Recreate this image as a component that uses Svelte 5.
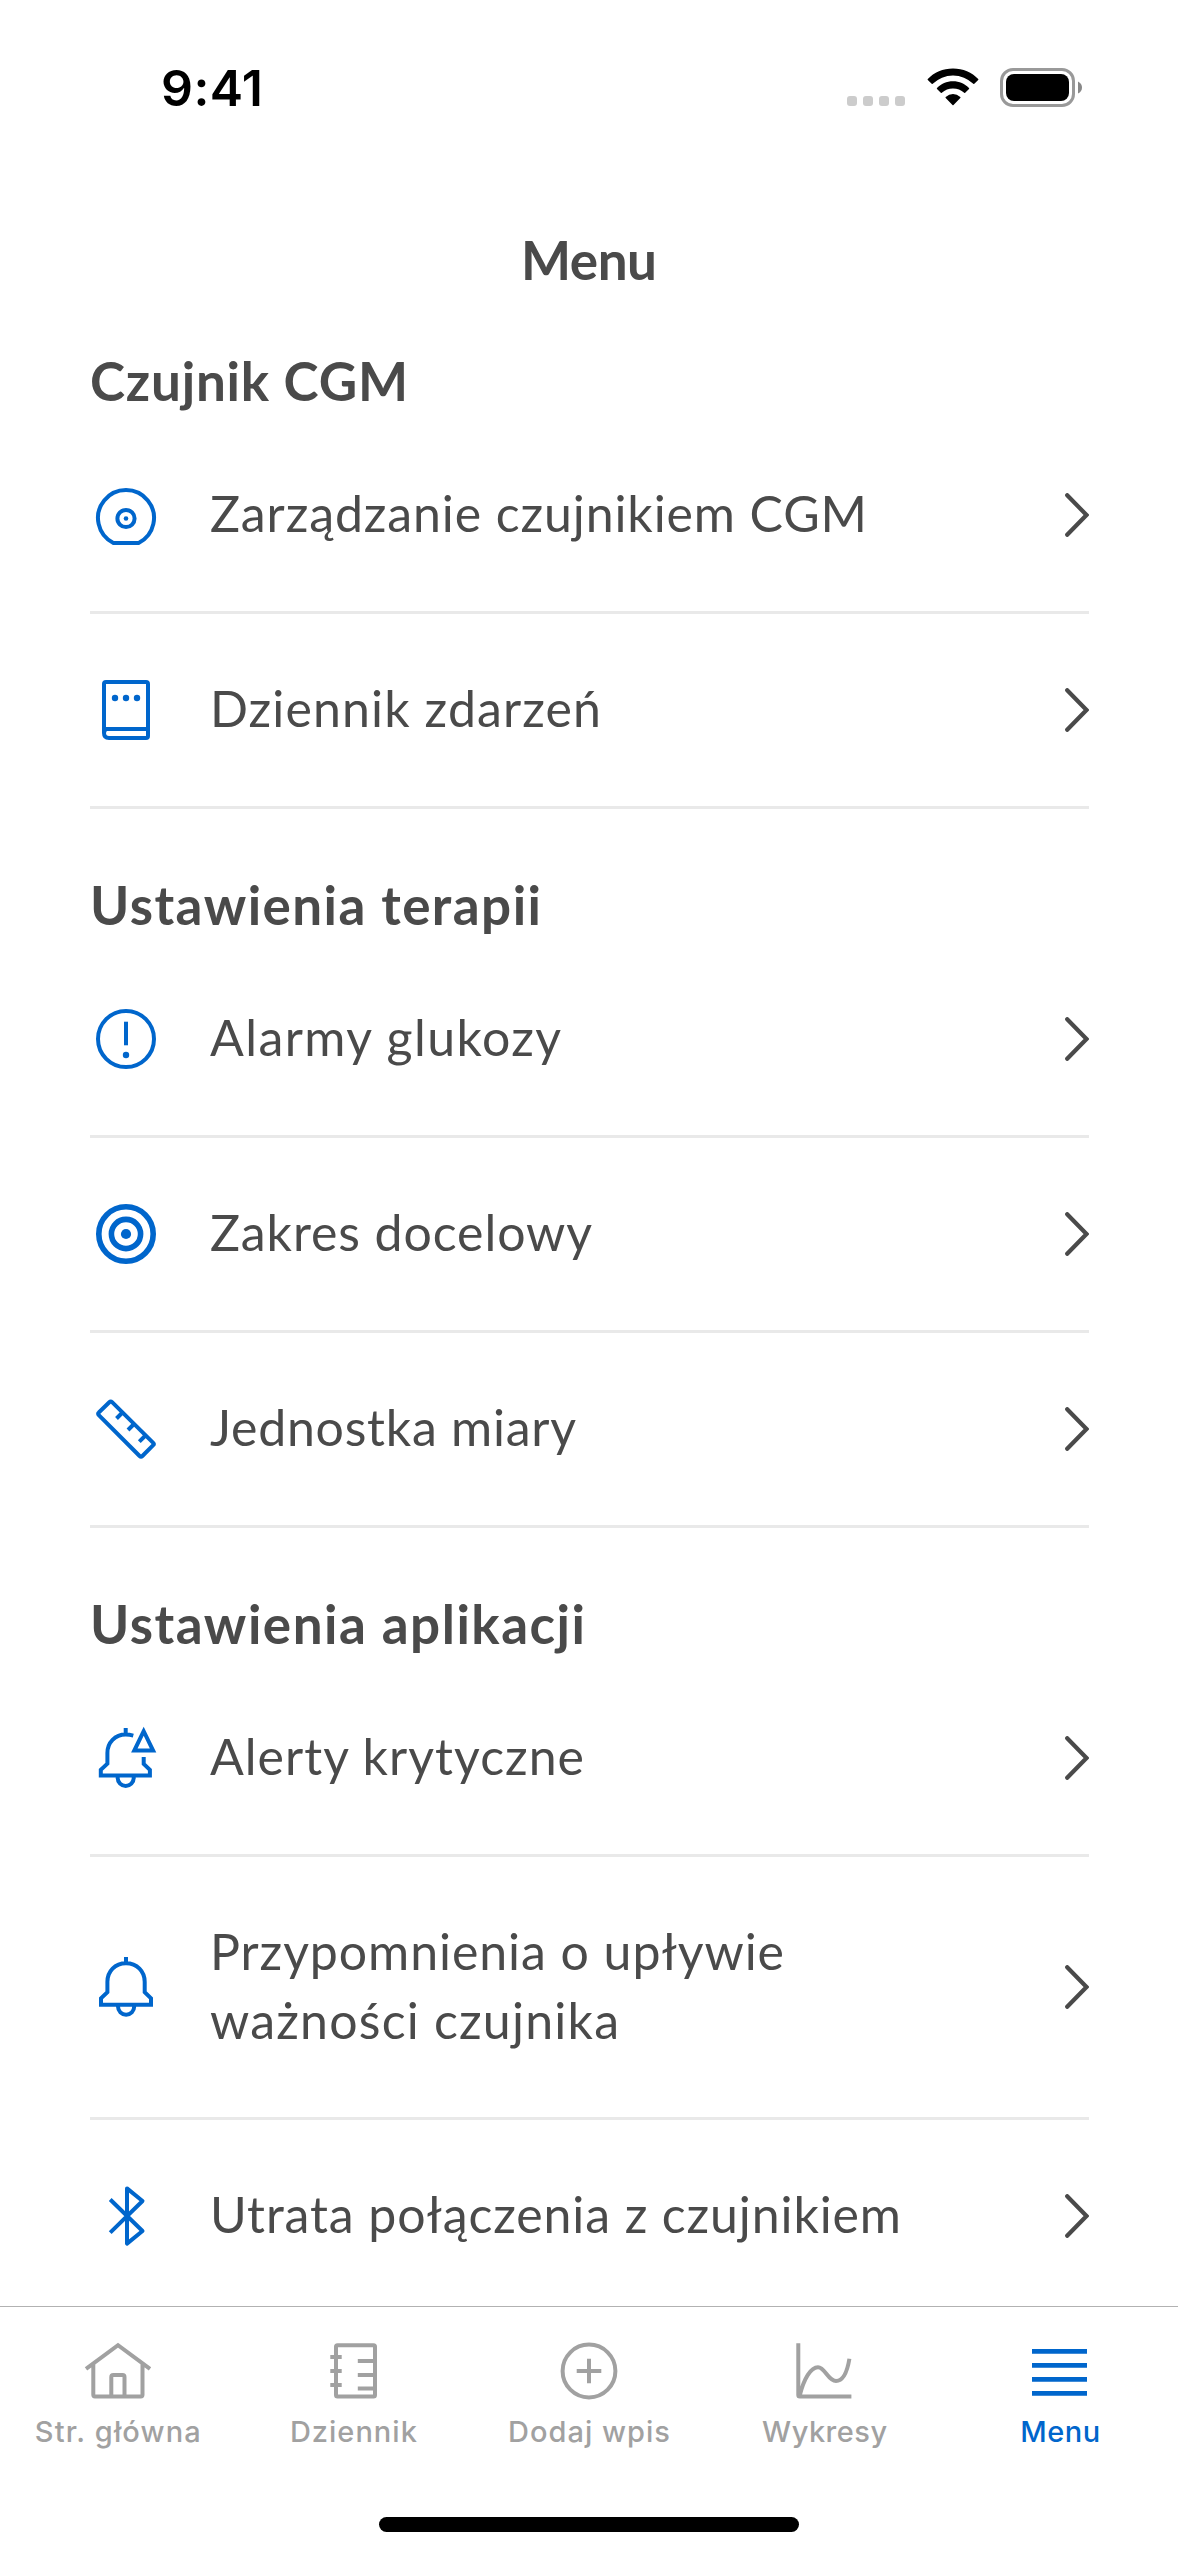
<script>
  const sections = [
    {
      title: 'Czujnik CGM', width: 318,
      items: [
        { icon: 'sensor', lines: [['Zarządzanie czujnikiem CGM', 657]] },
        { icon: 'book', lines: [['Dziennik zdarzeń', 391]] }
      ]
    },
    {
      title: 'Ustawienia terapii', width: 451,
      items: [
        { icon: 'alarm', lines: [['Alarmy glukozy', 351]] },
        { icon: 'target', lines: [['Zakres docelowy', 382]] },
        { icon: 'ruler', lines: [['Jednostka miary', 366]] }
      ]
    },
    {
      title: 'Ustawienia aplikacji', width: 495,
      items: [
        { icon: 'bellAlert', lines: [['Alerty krytyczne', 374]] },
        { icon: 'bell', lines: [['Przypomnienia o upływie', 574], ['ważności czujnika', 409]] },
        { icon: 'bluetooth', lines: [['Utrata połączenia z czujnikiem', 691]] }
      ]
    }
  ];

  const tabs = [
    { icon: 'home', label: 'Str. główna', width: 166 },
    { icon: 'journal', label: 'Dziennik', width: 127 },
    { icon: 'plus', label: 'Dodaj wpis', width: 162 },
    { icon: 'chart', label: 'Wykresy', width: 125 },
    { icon: 'menu', label: 'Menu', width: 80, active: true }
  ];

  // Tracks a label's letters so that it takes the given width.
  function track(node, width) {
    const natural = node.getBoundingClientRect().width;
    const gaps = node.textContent.length - 1;
    const spacing = (width - natural) / gaps;
    node.style.letterSpacing = `${spacing}px`;
    node.style.marginRight = `${-spacing}px`;
  }
</script>

{#snippet glyph(name)}
  <svg class="glyph" viewBox="0 0 72 72" width="72" height="72" aria-hidden="true">
    {#if name === 'sensor'}
      <path d="M23.4 64A28 28 0 1 1 48.6 64Z" stroke-linejoin="round" />
      <circle cx="36" cy="39.5" r="8.6" />
      <circle class="solid" cx="36" cy="39.5" r="2.3" />
    {:else if name === 'book'}
      <path d="M16 8H56Q58 8 58 10V62Q58 64 56 64H19Q14 64 14 59V10Q14 8 16 8ZM14 55H58M14 55Q14 57 15 59" />
      <circle class="solid" cx="25" cy="24" r="3.2" />
      <circle class="solid" cx="36" cy="24" r="3.2" />
      <circle class="solid" cx="47" cy="24" r="3.2" />
    {:else if name === 'alarm'}
      <circle cx="36" cy="36" r="28" />
      <path d="M36 18.7V42.3" />
      <circle class="solid" cx="36" cy="52" r="3.2" />
    {:else if name === 'target'}
      <circle class="heavy" cx="36" cy="36" r="27.2" />
      <circle class="heavy" cx="36" cy="36" r="14.6" />
      <circle class="solid" cx="36" cy="36" r="5.1" />
    {:else if name === 'ruler'}
      <path d="M19.3 9.2Q20.7 7.8 22.1 9.2L63.2 49.8Q64.4 51 63.2 52.2L52.4 63Q51 64.4 49.6 63L8.8 22.1Q7.4 20.7 8.8 19.5Z" />
      <path d="M33 19L26.5 25.5M44.5 30.5L38 37M56 42L49.3 48.7" />
    {:else if name === 'bellAlert'}
      <path d="M35.7 5.9V12.6M43.3 13.6Q39.5 12.6 35.7 12.6C25 12.6 17.4 20.5 17.4 31V41.6L10.8 47.8V53.4H59.9V47.8L53.7 42V35M27.7 54V56A8 8 0 0 0 43.7 56V54M53.7 9.2L44.3 28.5H63.1Z" />
    {:else if name === 'bell'}
      <path d="M36 6V12M36 12.3C25 12.3 17.4 20.3 17.4 30.8V41.2L11 47.3V53.8H61V47.3L54.7 41.2V30.8C54.7 20.3 47 12.3 36 12.3M28 54V55.6A8.1 8.1 0 0 0 44.2 55.6V54" />
    {:else if name === 'bluetooth'}
      <path stroke-linejoin="round" d="M20.2 19.5L52.5 51L37 63.6V8.4L52.5 21L20.2 52.6" />
    {:else if name === 'home'}
      <path d="M4 33.8L36 10.2L68 33.8M11.3 29V59.8Q11.3 61.5 13 61.5H58.8Q60.5 61.5 60.5 59.8V29M29.3 61V42Q29.3 40 31.3 40H40.5Q42.5 40 42.5 42V61" />
    {:else if name === 'journal'}
      <rect x="19" y="10.3" width="39" height="51.2" rx="1.5" />
      <path d="M13.3 22H24.7M13.3 36H24.7M13.3 50H24.7M40.8 26H58M40.8 40H58M40.8 53.6H58" />
    {:else if name === 'plus'}
      <circle cx="36" cy="36" r="26.4" />
      <path d="M36 23.7V48.3M23.7 36H48.3" />
    {:else if name === 'chart'}
      <path d="M9.3 8.3V60Q9.3 61.5 10.8 61.5H62.4M10.6 61C15 43 22 32.2 29 32.2S39 46 47 46S58.4 36 60.4 23.8" />
    {:else if name === 'menu'}
      <path class="bars" d="M8 16.4H63M8 30.4H63M8 44.4H63M8 58.4H63" />
    {/if}
  </svg>
{/snippet}

<div class="screen">
  <header class="status">
    <span class="time" use:track={102}>9:41</span>
    <div class="indicators">
      <div class="dots"><i></i><i></i><i></i><i></i></div>
      <svg class="wifi" width="52" height="38" viewBox="0 0 52 38" aria-hidden="true">
        <path d="M26 .5C36 .5 45 4.5 51.2 11Q51.6 11.5 51.2 12L47.3 15.8Q46.8 16.2 46.3 15.8A29 29 0 0 0 5.7 15.8Q5.2 16.2 4.7 15.8L.8 12Q.4 11.5 .8 11C7 4.5 16 .5 26 .5Z" />
        <path d="M26 13.3C32.3 13.3 38 15.8 42 20Q42.4 20.5 42 21L38.2 24.8Q37.7 25.2 37.2 24.8A16.4 16.4 0 0 0 14.8 24.8Q14.3 25.2 13.8 24.8L10 21Q9.6 20.5 10 20C14 15.8 19.7 13.3 26 13.3Z" />
        <path d="M26 26Q30 26 33.3 29Q33.8 29.5 33.3 30L26.5 37Q26 37.5 25.5 37L18.7 30Q18.2 29.5 18.7 29Q22 26 26 26Z" />
      </svg>
      <svg class="battery" width="82" height="39" viewBox="0 0 82 39" aria-hidden="true">
        <rect class="case" x="1.5" y="1.5" width="72" height="36" rx="11.5" />
        <rect x="6" y="6" width="63" height="27" rx="8" />
        <path class="nub" d="M78 13.5Q82 15.5 82 19.5T78 25.5Z" />
      </svg>
    </div>
  </header>

  <h1><span use:track={136}>Menu</span></h1>

  <main>
    {#each sections as section}
      <section>
        <h2><span use:track={section.width}>{section.title}</span></h2>
        {#each section.items as item}
          <div class="row">
            {@render glyph(item.icon)}
            <div class="label">
              {#each item.lines as [text, width]}
                <div><span use:track={width}>{text}</span></div>
              {/each}
            </div>
            <svg class="chevron" width="24" height="44" viewBox="0 0 24 44" aria-hidden="true">
              <path d="M2.2 2.2L21.5 22L2.2 41.8" />
            </svg>
          </div>
        {/each}
      </section>
    {/each}
  </main>

  <nav>
    <div class="tabs">
      {#each tabs as tab}
        <div class="tab" class:active={tab.active}>
          {@render glyph(tab.icon)}
          <span class="caption" use:track={tab.width}>{tab.label}</span>
        </div>
      {/each}
    </div>
    <div class="home-indicator"></div>
  </nav>
</div>

<style>
  :global(body) {
    margin: 0;
    background: #fff;
  }

  .screen {
    display: flex;
    flex-direction: column;
    width: 1178px;
    height: 2556px;
    overflow: hidden;
    background: #fff;
    color: #4a4a4a;
    font-family: Lato, "Open Sans", sans-serif;
  }

  span {
    display: inline-block;
    white-space: nowrap;
  }

  .status {
    display: flex;
    justify-content: space-between;
    box-sizing: border-box;
    flex: none;
    height: 223px;
    padding: 58px 96px 0 161px;
    color: #000;
  }

  .time {
    height: 60px;
    font: 600 50px/60px Inter, sans-serif;
  }

  .indicators {
    display: flex;
    align-items: flex-end;
    height: 49px;
  }

  .dots {
    display: flex;
    gap: 6px;
    margin: 0 22px 1px 0;
  }

  .dots i {
    width: 10px;
    height: 10px;
    border-radius: 3px;
    background: #ccc;
  }

  .wifi {
    margin: 0 21px 1px 0;
  }

  .case {
    fill: none;
    stroke: #999;
    stroke-width: 3;
  }

  .nub {
    fill: #888;
  }

  h1,
  h2 {
    margin: 0;
    font-size: 53px;
    font-weight: 700;
    line-height: 74px;
  }

  h1 {
    flex: none;
    height: 62px;
    text-align: center;
  }

  main {
    flex: 1;
    min-height: 0;
    overflow: hidden;
    padding: 0 89px 0 90px;
  }

  h2 {
    box-sizing: border-box;
    height: 134px;
    padding-top: 59px;
  }

  .row {
    display: flex;
    align-items: center;
    padding: 61px 0 62px;
    border-bottom: 3px solid #e9e9e9;
  }

  .row .glyph {
    margin: -10px 48px -10px 0;
    color: #0066cc;
  }

  .label {
    flex: 1;
    margin: -1px 0 1px;
    font-size: 50px;
    line-height: 69px;
  }

  .label div {
    height: 69px;
  }

  .label div + div {
    height: 68px;
  }

  .glyph {
    display: block;
    flex: none;
    fill: none;
    stroke: currentColor;
    stroke-width: 4;
  }

  .solid {
    fill: currentColor;
    stroke: none;
  }

  .heavy {
    stroke-width: 5.6;
  }

  .bars {
    stroke-width: 4.8;
  }

  .chevron {
    flex: none;
    fill: none;
    stroke: #4a4a4a;
    stroke-width: 4.2;
    stroke-linecap: round;
  }

  nav {
    display: flex;
    flex: none;
    flex-direction: column;
    align-items: center;
    box-sizing: border-box;
    height: 250px;
    border-top: 1px solid #b2b2b2;
    background: #fff;
  }

  .tabs {
    display: flex;
    width: 100%;
    height: 210px;
  }

  .tab {
    display: flex;
    flex: 1;
    flex-direction: column;
    align-items: center;
    padding-top: 28px;
    color: #a1a1a1;
  }

  .tab.active {
    color: #0066cc;
  }

  .caption {
    margin-top: 7px;
    font: 500 29px/36px Inter, sans-serif;
  }

  .home-indicator {
    width: 420px;
    height: 15px;
    border-radius: 8px;
    background: #000;
  }
</style>
